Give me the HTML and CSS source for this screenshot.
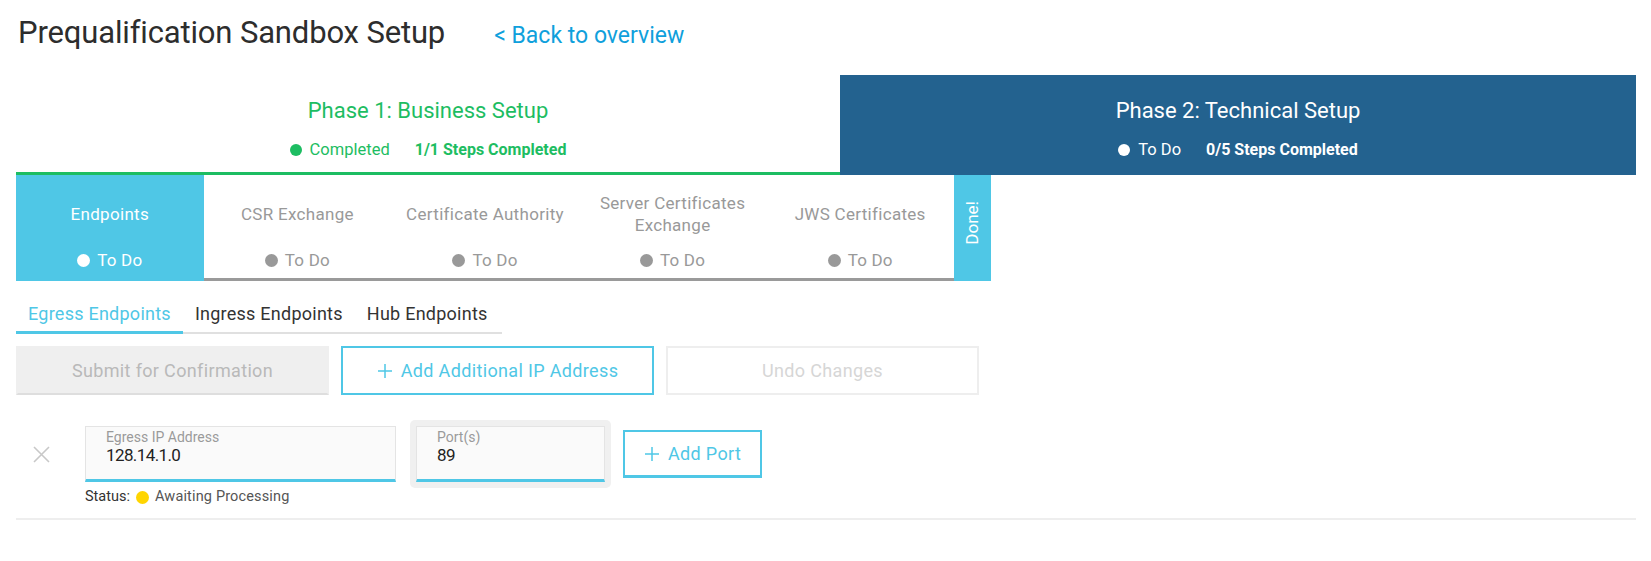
FILE: index.html
```html
<!DOCTYPE html>
<html lang="en">
<head>
<meta charset="utf-8">
<title>Prequalification Sandbox Setup</title>
<link rel="stylesheet" href="styles.css">
</head>
<body>
<div class="page">
  <header class="title-row">
    <h1 class="title">Prequalification Sandbox Setup</h1>
    <a class="back-link" href="#">&lt; Back to overview</a>
  </header>

  <div class="phases">
    <div class="phase phase-done">
      <div class="phase-title">Phase 1: Business Setup</div>
      <div class="phase-status">
        <span class="dot"></span><span class="phase-state">Completed</span>
        <strong class="phase-count">1/1 Steps Completed</strong>
      </div>
    </div>
    <div class="phase phase-active">
      <div class="phase-title">Phase 2: Technical Setup</div>
      <div class="phase-status">
        <span class="dot"></span><span class="phase-state">To Do</span>
        <strong class="phase-count">0/5 Steps Completed</strong>
      </div>
    </div>
  </div>

  <div class="steps">
    <div class="step step-active">
      <div class="step-title">Endpoints</div>
      <div class="step-status"><span class="dot"></span>To Do</div>
    </div>
    <div class="step">
      <div class="step-title">CSR Exchange</div>
      <div class="step-status"><span class="dot"></span>To Do</div>
    </div>
    <div class="step">
      <div class="step-title">Certificate Authority</div>
      <div class="step-status"><span class="dot"></span>To Do</div>
    </div>
    <div class="step">
      <div class="step-title">Server Certificates<br>Exchange</div>
      <div class="step-status"><span class="dot"></span>To Do</div>
    </div>
    <div class="step">
      <div class="step-title">JWS Certificates</div>
      <div class="step-status"><span class="dot"></span>To Do</div>
    </div>
    <div class="done-box"><span class="done-text">Done!</span></div>
  </div>

  <nav class="tabs">
    <a class="tab tab-active" href="#">Egress Endpoints</a>
    <a class="tab" href="#">Ingress Endpoints</a>
    <a class="tab" href="#">Hub Endpoints</a>
  </nav>

  <div class="actions">
    <button class="btn btn-disabled" type="button">Submit for Confirmation</button>
    <button class="btn btn-outline" type="button">
      <svg class="plus" viewBox="0 0 16 16" width="16" height="16"><path d="M8 1v14M1 8h14" fill="none" stroke="currentColor" stroke-width="1.5"/></svg>
      Add Additional IP Address
    </button>
    <button class="btn btn-ghost" type="button">Undo Changes</button>
  </div>

  <div class="entry">
    <svg class="remove" viewBox="0 0 17 17" width="17" height="17"><path d="M1 1l15 15M16 1L1 16" fill="none" stroke="#c8c8c8" stroke-width="1.6"/></svg>
    <div class="ip-col">
      <div class="field field-ip">
        <div class="field-label">Egress IP Address</div>
        <div class="field-value">128.14.1.0</div>
      </div>
      <div class="status-line">
        <span class="status-key">Status:</span>
        <span class="dot dot-yellow"></span>
        <span class="status-val">Awaiting Processing</span>
      </div>
    </div>
    <div class="port-wrap">
      <div class="field field-port">
        <div class="field-label">Port(s)</div>
        <div class="field-value">89</div>
      </div>
    </div>
    <button class="btn btn-outline btn-port" type="button">
      <svg class="plus" viewBox="0 0 16 16" width="16" height="16"><path d="M8 1v14M1 8h14" fill="none" stroke="currentColor" stroke-width="1.5"/></svg>
      Add Port
    </button>
  </div>
</div>
</body>
</html>
```

FILE: styles.css
```css
* { box-sizing: border-box; }

body {
  margin: 0;
  background: #fff;
  font-family: Roboto, "Noto Sans", sans-serif;
  color: #333;
}

.page {
  padding: 0 15px 0 16px;
}

/* Title row */
.title-row {
  display: flex;
  align-items: baseline;
  height: 75px;
  padding: 18px 0 0 2px;
}

.title {
  margin: 0;
  font-size: 31px;
  line-height: 30px;
  font-weight: 400;
  letter-spacing: -0.15px;
  color: #2d2d2d;
}

.back-link {
  margin-left: 49px;
  font-size: 23px;
  color: #0fa0dc;
  text-decoration: none;
}

/* Phases */
.phases {
  display: grid;
  grid-template-columns: 824px 1fr;
  height: 100px;
}

.phase {
  display: flex;
  flex-direction: column;
  align-items: center;
  padding-top: 22px;
}

.phase-done {
  color: #1dbd62;
  border-bottom: 3px solid #1dbd62;
}

.phase-active {
  color: #fff;
  background: #23628f;
}

.phase-title {
  font-size: 22px;
  line-height: 28px;
}

.phase-status {
  display: flex;
  align-items: center;
  margin-top: 15px;
  font-size: 16.5px;
  line-height: 20px;
}

.phase-status .dot {
  width: 12px;
  height: 12px;
  margin-right: 8px;
  background: currentColor;
}

.phase-count {
  margin-left: 25px;
  font-size: 16px;
  font-weight: 700;
}

.dot {
  display: inline-block;
  border-radius: 50%;
  flex: none;
}

/* Steps */
.steps {
  display: grid;
  grid-template-columns: repeat(5, 187.6px) 37px;
  height: 106px;
}

.step {
  display: flex;
  flex-direction: column;
  align-items: center;
  padding-top: 17px;
  color: #999;
  border-bottom: 3px solid #9a9a9a;
}

.step-active {
  color: #fff;
  background: #4fc7e6;
  border-bottom-color: transparent;
}

.step-title {
  display: flex;
  align-items: center;
  justify-content: center;
  height: 44px;
  text-align: center;
  font-size: 17px;
  line-height: 22px;
  letter-spacing: 0.3px;
}

.step-status {
  display: flex;
  align-items: center;
  margin-top: 14px;
  font-size: 17px;
  line-height: 20px;
  letter-spacing: 0.2px;
}

.step-status .dot {
  width: 13px;
  height: 13px;
  margin-right: 7px;
  background: #999;
}

.step-active .step-status .dot {
  background: #fff;
}

.done-box {
  display: flex;
  align-items: center;
  justify-content: center;
  padding-bottom: 10px;
  background: #4fc7e6;
  color: #fff;
}

.done-text {
  writing-mode: vertical-rl;
  transform: rotate(180deg);
  font-size: 17px;
  line-height: 20px;
}

/* Tabs */
.tabs {
  display: flex;
  width: 486px;
  border-bottom: 2px solid #e0e0e0;
}

.tab {
  padding: 21px 12px 5px;
  margin-bottom: -2px;
  border-bottom: 3px solid transparent;
  font-size: 18px;
  line-height: 24px;
  letter-spacing: 0.25px;
  color: #333;
  text-decoration: none;
}

.tab-active {
  color: #4fc7e6;
  border-bottom-color: #4fc7e6;
}

/* Action buttons */
.actions {
  display: flex;
  gap: 12px;
  margin-top: 12px;
}

.btn {
  display: inline-flex;
  align-items: center;
  justify-content: center;
  gap: 8px;
  width: 313px;
  height: 49px;
  padding: 0;
  font-family: inherit;
  font-size: 18px;
  letter-spacing: 0.35px;
  background: #fff;
  border: 2px solid transparent;
  cursor: pointer;
}

.btn-disabled {
  background: #efefef;
  color: #b9b9b9;
  border-color: #efefef #efefef #dedede;
}

.btn-outline {
  color: #4fc7e6;
  border-color: #4fc7e6;
}

.btn-ghost {
  color: #d6d6d6;
  border-color: #eeeeee;
}

.plus {
  flex: none;
}

/* Entry row */
.entry {
  display: flex;
  align-items: flex-start;
  margin-top: 25px;
  padding-bottom: 12px;
  border-bottom: 2px solid #eeeeee;
}

.remove {
  flex: none;
  margin: 26px 35px 0 17px;
}

.ip-col {
  width: 311px;
  margin-top: 6px;
}

.field {
  height: 56px;
  padding: 2px 20px 0;
  background: #fafafa;
  border: 1px solid #e4e4e4;
  border-bottom: 3px solid #4fc7e6;
}

.field-label {
  font-size: 14px;
  line-height: 16px;
  color: #9a9a9a;
}

.field-value {
  font-size: 17px;
  line-height: 20px;
  color: #222;
  letter-spacing: -0.6px;
}

.status-line {
  display: flex;
  align-items: center;
  gap: 6px;
  margin-top: 6px;
  font-size: 14.5px;
  line-height: 18px;
}

.status-key {
  color: #333;
}

.dot-yellow {
  width: 13px;
  height: 13px;
  background: #ffd500;
}

.status-val {
  color: #555;
  letter-spacing: 0.15px;
}

.port-wrap {
  margin-left: 14px;
  padding: 6px;
  background: #f0f0f0;
  border-radius: 5px;
}

.field-port {
  width: 189px;
  padding-left: 20px;
}

.btn-port {
  width: 139px;
  height: 48px;
  margin: 10px 0 0 12px;
  border-bottom-width: 3px;
}
```
